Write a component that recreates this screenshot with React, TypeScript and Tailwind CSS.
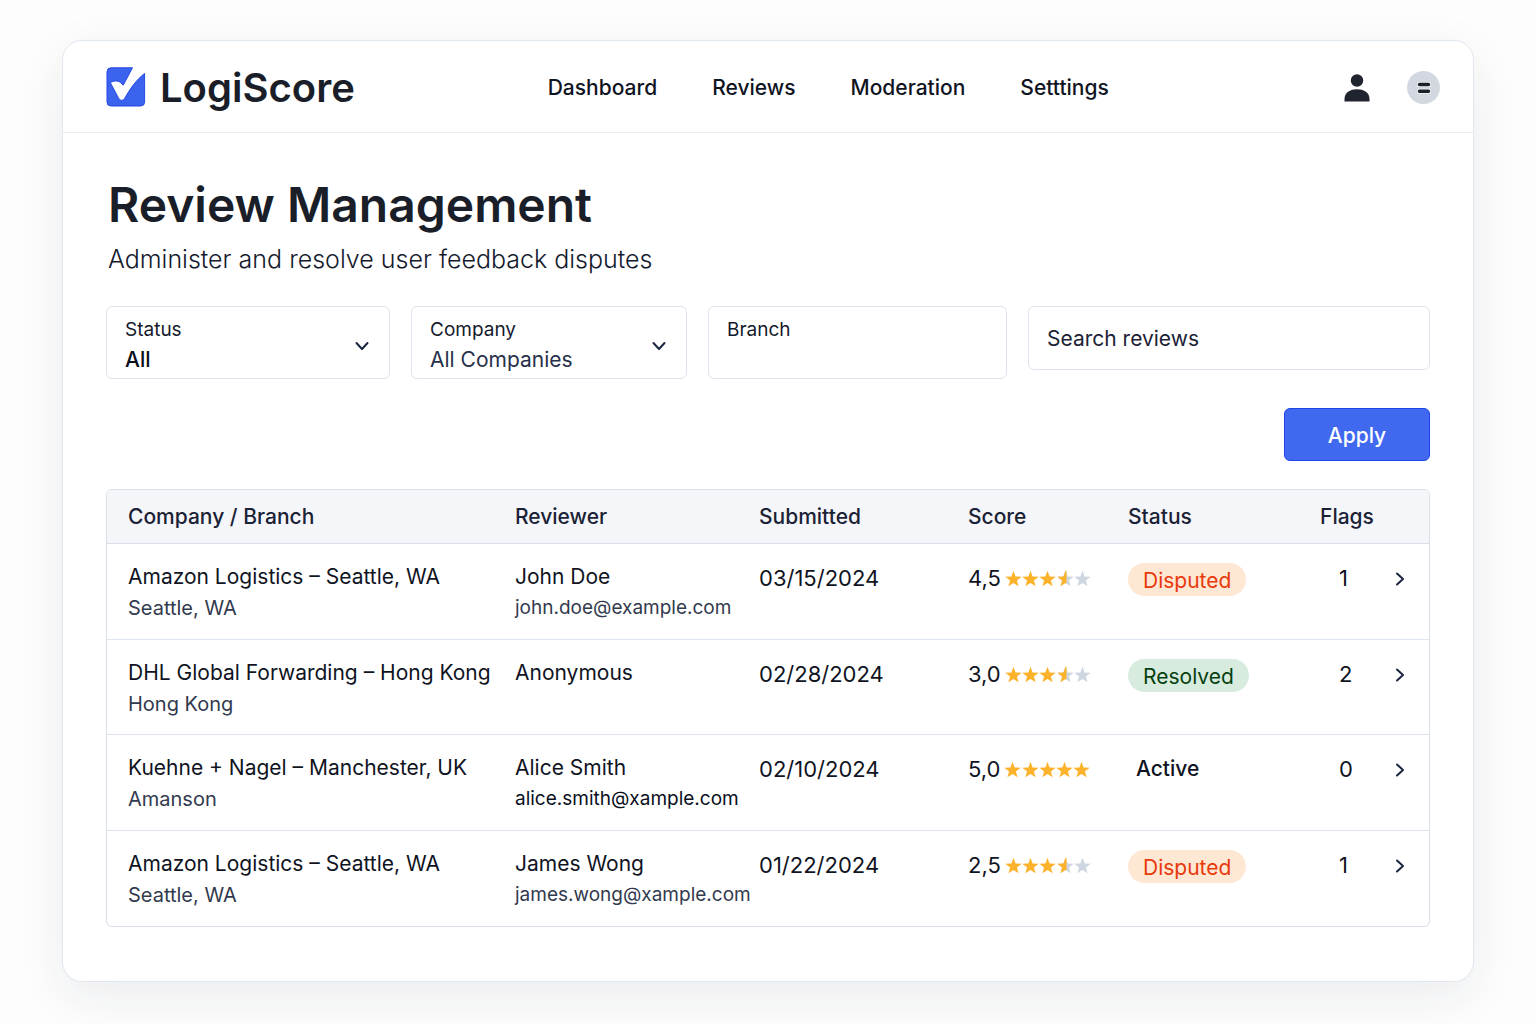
import type { ReactNode } from "react";

type ReviewStatus = "Disputed" | "Resolved" | "Active";

interface Review {
  company: string;
  branch: string;
  reviewer: string;
  email?: string;
  emailTone?: string;
  submitted: string;
  score: string;
  stars: number;
  status: ReviewStatus;
  flags: number;
}

const reviews: Review[] = [
  { company: "Amazon Logistics – Seattle, WA", branch: "Seattle, WA", reviewer: "John Doe", email: "john.doe@example.com", submitted: "03/15/2024", score: "4,5", stars: 3.5, status: "Disputed", flags: 1 },
  { company: "DHL Global Forwarding – Hong Kong", branch: "Hong Kong", reviewer: "Anonymous", submitted: "02/28/2024", score: "3,0", stars: 3.5, status: "Resolved", flags: 2 },
  { company: "Kuehne + Nagel – Manchester, UK", branch: "Amanson", reviewer: "Alice Smith", email: "alice.smith@xample.com", emailTone: "text-[#0b0f1c]", submitted: "02/10/2024", score: "5,0", stars: 5, status: "Active", flags: 0 },
  { company: "Amazon Logistics – Seattle, WA", branch: "Seattle, WA", reviewer: "James Wong", email: "james.wong@xample.com", submitted: "01/22/2024", score: "2,5", stars: 3.5, status: "Disputed", flags: 1 },
];

function Logo() {
  return (
    <svg width="40" height="40" viewBox="0 1 40 40" className="overflow-visible" aria-hidden="true">
      <path
        d="M5 .8H26.5L17.200 18.200 14.800 15.800C11.800 13.200 7.200 13.600 4.400 15.800L12.600 31.200C14.200 34 17.200 34 18.800 31.200C24 22 30 13 38.600 6.500V35a4 4 0 0 1-4 4H5a4 4 0 0 1-4-4V4.800a4 4 0 0 1 4-4Z"
        fill="#3b63ee"
        stroke="#2549e6"
        strokeWidth="1"
      />
    </svg>
  );
}

function UserIcon() {
  return (
    <svg width="26" height="28" viewBox="0 0 26 28" fill="#20242f" aria-hidden="true">
      <circle cx="13" cy="6.500" r="6.200" />
      <path d="M.5 27.500v-2.500C.5 18.500 6 15.200 13 15.200S25.500 18.500 25.500 25v2.500Z" />
    </svg>
  );
}

function MenuIcon() {
  return (
    <svg width="14" height="12" viewBox="0 0 14 12" className="overflow-visible" aria-hidden="true">
      <g stroke="#f4f5f8" strokeWidth="5" strokeLinecap="round">
        <path d="M2.500 2.500h9M2.500 9.200h9" />
      </g>
      <g stroke="#1c202b" strokeWidth="3.500" strokeLinecap="round">
        <path d="M2.500 2.500h9M2.500 9.200h9" />
      </g>
    </svg>
  );
}

function Chevron({ className }: { className: string }) {
  return (
    <svg className={className} width="14" height="14" viewBox="0 0 14 14" fill="none" stroke="#1b2540" strokeWidth="2" strokeLinecap="round" strokeLinejoin="round" aria-hidden="true">
      <path d="M1.500 4 7 10l5.500-6" />
    </svg>
  );
}

const starPath = "M9 .8 11.100 6.500 17.200 6.700 12.400 10.400 14.100 16.300 9 12.900 3.900 16.300 5.600 10.400 .8 6.700 6.900 6.500Z";
const halfPath = "M10 .8V13.500L9 12.900 3.900 16.300 5.600 10.400 .8 6.700 6.900 6.500 9 .8Z";

function Stars({ value }: { value: number }) {
  return (
    <span className="flex w-[86px] justify-between" role="img" aria-label={`${value} of 5 stars`}>
      {[0, 1, 2, 3, 4].map((i) => (
        <svg key={i} width="17" height="17" viewBox="0.5 0 17 17" aria-hidden="true">
          <path d={starPath} fill={value >= i + 1 ? "#fdb22b" : "#ced6e1"} />
          {value === i + 0.5 && <path d={halfPath} fill="#fdb22b" />}
        </svg>
      ))}
    </span>
  );
}

function StatusLabel({ status }: { status: ReviewStatus }) {
  if (status === "Active") {
    return <div className="pl-2 font-medium text-[#10141f]">{status}</div>;
  }
  const tone = status === "Disputed" ? "bg-[#fee7d3] text-[#e8390b]" : "bg-[#d7ecdf] text-[#06400f]";
  return <span className={`mt-px inline-flex h-[33px] items-center rounded-full px-[15px] pt-0.5 ${tone}`}>{status}</span>;
}

const fieldBox = "relative flex flex-col rounded-md border border-[#dde3ec] px-[18px] text-[#141a2c]";

function SelectField({ id, label, value, valueClass }: { id: string; label: string; value: string; valueClass: string }) {
  return (
    <div className={`${fieldBox} h-[73px] pt-2`}>
      <label htmlFor={id} className="text-[19px] leading-[30px]">{label}</label>
      <select id={id} className={`w-full appearance-none bg-transparent text-[21px] leading-[30px] outline-none ${valueClass}`}>
        <option>{value}</option>
      </select>
      <Chevron className="pointer-events-none absolute right-5 top-8" />
    </div>
  );
}

function Th({ children, label }: { children?: ReactNode; label?: string }) {
  return <th scope="col" aria-label={label} className="h-[54px] border-b border-[#d8dfe9] p-0 text-left font-medium first:pl-[21px]">{children}</th>;
}

const cell = "border-b border-[#dfe5ee] p-0 align-top group-last:border-b-0";

export default function App() {
  return (
    <div className="min-h-screen bg-[#fdfdfd] px-[62px] pb-[42px] pt-10 font-['Inter',sans-serif] text-[#10141f]">
      <div className="rounded-[20px] border border-[#e0e7ef] bg-white pb-[54px] shadow-[0_14px_48px_rgba(30,41,59,0.08)]">
        <header className="flex h-[92px] items-center border-b border-[#e8edf3] pl-[43px] pr-[33px] pt-0.5">
          <div className="flex flex-[4]">
            <a href="#" className="flex items-center gap-3.5 text-[#1a1e29]">
              <Logo />
              <span className="text-[40px] font-semibold leading-[48px]">LogiScore</span>
            </a>
          </div>
          <nav className="flex items-center gap-[55px] text-[21px] font-medium">
            <a href="#">Dashboard</a>
            <a href="#">Reviews</a>
            <a href="#">Moderation</a>
            <a href="#">Setttings</a>
          </nav>
          <div className="flex flex-[3] items-center justify-end gap-[37px]">
            <button type="button" aria-label="Account"><UserIcon /></button>
            <button type="button" aria-label="Menu" className="flex size-[33px] items-center justify-center rounded-full bg-[#d3d7df]">
              <MenuIcon />
            </button>
          </div>
        </header>

        <main className="px-[43px] pt-10">
          <div className="pl-0.5">
            <h1 className="text-[48px] font-semibold leading-[64px] text-[#1a1e29]">Review Management</h1>
            <p className="mt-1 text-[25px] font-light leading-9 text-[#141a2c]">Administer and resolve user feedback disputes</p>
          </div>

          <form className="mt-[29px]" onSubmit={(e) => e.preventDefault()}>
            <div className="grid grid-cols-[284fr_276fr_299fr_402fr] items-start gap-[21px]">
              <SelectField id="status" label="Status" value="All" valueClass="font-medium text-[#0a0e1a]" />
              <SelectField id="company" label="Company" value="All Companies" valueClass="text-[#27304a]" />
              <div className={`${fieldBox} h-[73px] pt-2`}>
                <label htmlFor="branch" className="text-[19px] leading-[30px]">Branch</label>
                <input id="branch" type="text" className="h-[30px] w-full bg-transparent text-[21px] outline-none" />
              </div>
              <input
                type="search"
                aria-label="Search reviews"
                placeholder="Search reviews"
                className="h-16 w-full rounded-md border border-[#dde3ec] px-[18px] text-[21px] outline-none placeholder:text-[#1b2236]"
              />
            </div>
            <div className="mt-[29px] flex justify-end">
              <button type="submit" className="h-[53px] w-[146px] rounded-md border border-[#1f45e8] bg-[#4169f0] pt-0.5 text-[21px] font-medium text-white">Apply</button>
            </div>
          </form>

          <div className="mt-7 overflow-hidden rounded-md border border-[#d8dfe9]">
            <table className="w-full table-fixed border-separate border-spacing-0 text-[21px] leading-[32px]">
              <colgroup>
                <col />
                <col className="w-[244px]" />
                <col className="w-[209px]" />
                <col className="w-[160px]" />
                <col className="w-[192px]" />
                <col className="w-[73px]" />
                <col className="w-[36px]" />
              </colgroup>
              <thead className="bg-[#f5f6f9] text-[#1b2236]">
                <tr>
                  <Th>Company / Branch</Th>
                  <Th>Reviewer</Th>
                  <Th>Submitted</Th>
                  <Th>Score</Th>
                  <Th>Status</Th>
                  <Th>Flags</Th>
                  <Th label="Open" />
                </tr>
              </thead>
              <tbody>
                {reviews.map((r) => (
                  <tr key={r.submitted} className="group h-24 even:h-[95px]">
                    <td className={`${cell} pl-[21px] pt-[17px]`}>
                      <div>{r.company}</div>
                      <div className="text-[20px] leading-[30px] text-[#323a4e]">{r.branch}</div>
                    </td>
                    <td className={`${cell} pt-[17px]`}>
                      <div>{r.reviewer}</div>
                      <div className={`text-[19px] leading-[30px] ${r.emailTone ?? "text-[#323a4e]"}`}>{r.email}</div>
                    </td>
                    <td className={`${cell} pt-[18px] text-[22px]`}>{r.submitted}</td>
                    <td className={`${cell} pt-[18px] text-[22px]`}>
                      <div className="flex items-center gap-1">
                        <span>{r.score}</span>
                        <Stars value={r.stars} />
                      </div>
                    </td>
                    <td className={`${cell} pt-[18px]`}><StatusLabel status={r.status} /></td>
                    <td className={`${cell} pl-[19px] pt-[18px] text-[22px]`}>{r.flags}</td>
                    <td className={`${cell} pt-[18px]`}>
                      <button type="button" aria-label={`Open review by ${r.reviewer}`} className="flex h-[34px] items-center">
                        <Chevron className="-rotate-90" />
                      </button>
                    </td>
                  </tr>
                ))}
              </tbody>
            </table>
          </div>
        </main>
      </div>
    </div>
  );
}
